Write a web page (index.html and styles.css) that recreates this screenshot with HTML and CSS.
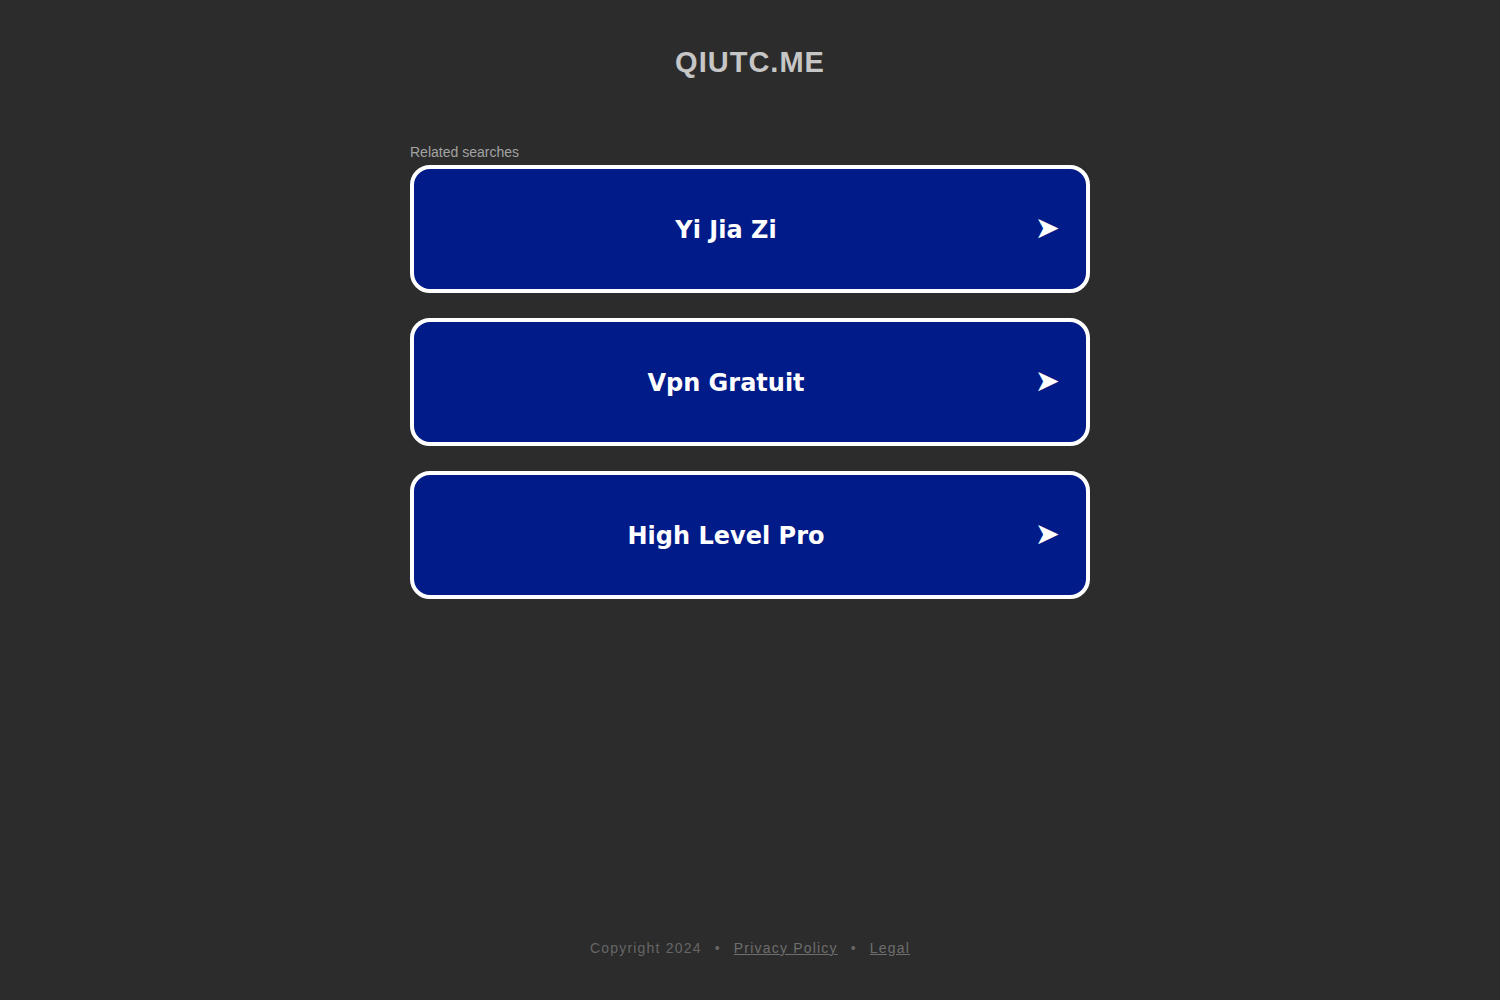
FILE: index.html
```html
<!DOCTYPE html>
<html>
<head>
<meta charset="utf-8">
<link rel="stylesheet" href="styles.css">
</head>
<body>
<div class="page">
  <header class="header"><h1 class="domain">QIUTC.ME</h1></header>
  <main class="content">
    <div class="related">Related searches</div>
    <div class="list">
      <a class="item" href="#"><span class="label">Yi Jia Zi</span><span class="arrow">➤</span></a>
      <a class="item" href="#"><span class="label">Vpn Gratuit</span><span class="arrow">➤</span></a>
      <a class="item" href="#"><span class="label">High Level Pro</span><span class="arrow">➤</span></a>
    </div>
  </main>
  <footer class="footer">
    <span>Copyright 2024</span><span class="dot">•</span><a href="#">Privacy Policy</a><span class="dot">•</span><a href="#">Legal</a>
  </footer>
</div>
</body>
</html>
```
FILE: styles.css
```css
html, body { margin: 0; padding: 0; }
body {
  background: #2c2c2c;
  font-family: "Liberation Sans", Arial, sans-serif;
  height: 1000px;
}
.page {
  height: 1000px;
  display: flex;
  flex-direction: column;
}
.header {
  padding-top: 45px;
  text-align: center;
}
.domain {
  margin: 0;
  font-size: 29px;
  line-height: 34px;
  font-weight: bold;
  color: #c6c6c6;
  letter-spacing: 1px;
}
.content {
  width: 680px;
  margin: 0 auto;
  padding-top: 65px;
  flex: 1;
}
.related {
  font-size: 14px;
  line-height: 16px;
  color: #a3a3a3;
  margin-bottom: 5px;
}
.list {
  display: flex;
  flex-direction: column;
  gap: 25px;
}
.item {
  box-sizing: border-box;
  height: 128px;
  border: 4px solid #ffffff;
  border-radius: 20px;
  background: #011b88;
  display: flex;
  align-items: center;
  justify-content: center;
  position: relative;
  text-decoration: none;
  padding-right: 48px;
  padding-top: 2px;
}
.label {
  font-family: "DejaVu Sans", Verdana, sans-serif;
  font-weight: bold;
  font-size: 24px;
  color: #ffffff;
}
.arrow {
  position: absolute;
  right: 26px;
  top: 50%;
  transform: translateY(-54%);
  color: #ffffff;
  font-family: "DejaVu Sans", sans-serif;
  font-size: 30px;
  line-height: 1;
}
.footer {
  text-align: center;
  padding-bottom: 44px;
  font-size: 14px;
  line-height: 16px;
  letter-spacing: 1.2px;
  color: #666666;
}
.footer a { color: #6e6e6e; text-decoration: underline; }
.dot { margin: 0 13px; }
```
